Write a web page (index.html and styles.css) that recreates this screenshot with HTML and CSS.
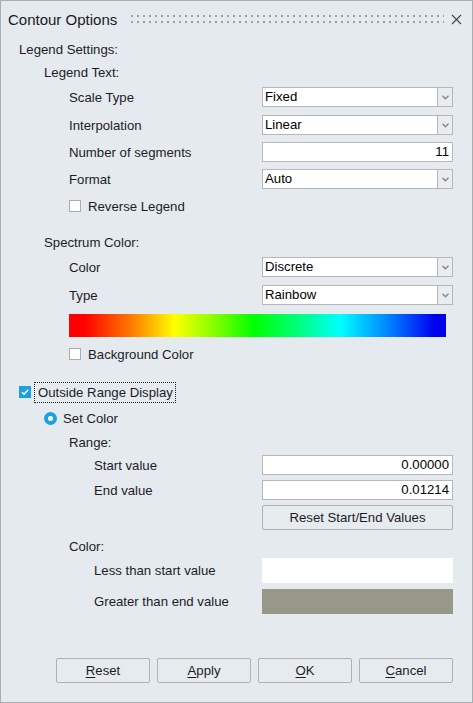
FILE: index.html
```html
<!DOCTYPE html>
<html>
<head>
<meta charset="utf-8">
<link rel="stylesheet" href="styles.css">
</head>
<body>
<div class="window">
  <div class="titlebar">
    <span class="title">Contour Options</span>
    <span class="grip"></span>
    <span class="close">
      <svg width="11" height="11" viewBox="0 0 11 11"><path d="M1 1L10 10M10 1L1 10" stroke="#444" stroke-width="1.1" fill="none"/></svg>
    </span>
  </div>

  <div class="row h22 l1">Legend Settings:</div>
  <div class="row h22 l2 mt1">Legend Text:</div>

  <div class="row h20 l3 mt4"><span class="label">Scale Type</span><div class="select"><span class="val">Fixed</span><span class="arrow"><svg width="7" height="5" viewBox="0 0 7 5"><path d="M0.5 0.8L3.5 3.8L6.5 0.8" stroke="#888" stroke-width="1.4" fill="none"/></svg></span></div></div>
  <div class="row h20 l3 mt8"><span class="label">Interpolation</span><div class="select"><span class="val">Linear</span><span class="arrow"><svg width="7" height="5" viewBox="0 0 7 5"><path d="M0.5 0.8L3.5 3.8L6.5 0.8" stroke="#888" stroke-width="1.4" fill="none"/></svg></span></div></div>
  <div class="row h20 l3 mt7"><span class="label">Number of segments</span><div class="input">11</div></div>
  <div class="row h20 l3 mt7"><span class="label">Format</span><div class="select"><span class="val">Auto</span><span class="arrow"><svg width="7" height="5" viewBox="0 0 7 5"><path d="M0.5 0.8L3.5 3.8L6.5 0.8" stroke="#888" stroke-width="1.4" fill="none"/></svg></span></div></div>
  <div class="row h20 l3 mt7"><span class="checkbox"></span><span class="cblabel">Reverse Legend</span></div>

  <div class="row h22 l2 mt15">Spectrum Color:</div>
  <div class="row h20 l3 mt4"><span class="label">Color</span><div class="select"><span class="val">Discrete</span><span class="arrow"><svg width="7" height="5" viewBox="0 0 7 5"><path d="M0.5 0.8L3.5 3.8L6.5 0.8" stroke="#888" stroke-width="1.4" fill="none"/></svg></span></div></div>
  <div class="row h20 l3 mt8"><span class="label">Type</span><div class="select"><span class="val">Rainbow</span><span class="arrow"><svg width="7" height="5" viewBox="0 0 7 5"><path d="M0.5 0.8L3.5 3.8L6.5 0.8" stroke="#888" stroke-width="1.4" fill="none"/></svg></span></div></div>
  <div class="row l3 mt9"><div class="spectrum"></div></div>
  <div class="row h20 l3 mt7"><span class="checkbox"></span><span class="cblabel">Background Color</span></div>

  <div class="row h20 l1 mt18"><span class="checkbox checked"><svg width="12" height="12" viewBox="0 0 12 12"><path d="M3 6.2L5 8.2L9.2 3.8" stroke="#fff" stroke-width="1.6" fill="none"/></svg></span><span class="cblabel focus">Outside Range Display</span></div>
  <div class="row h20 l2 mt6"><span class="radio"></span><span class="cblabel">Set Color</span></div>
  <div class="row h20 l3 mt4">Range:</div>
  <div class="row h20 l4 mt3"><span class="label">Start value</span><div class="input">0.00000</div></div>
  <div class="row h20 l4 mt5"><span class="label">End value</span><div class="input">0.01214</div></div>
  <div class="row h25 l4 mt5"><span class="label"></span><div class="button wide">Reset Start/End Values</div></div>
  <div class="row h20 l3 mt6">Color:</div>
  <div class="row h25 l4 mt2"><span class="label">Less than start value</span><div class="swatch white"></div></div>
  <div class="row h25 l4 mt6"><span class="label">Greater than end value</span><div class="swatch grey"></div></div>

  <div class="footer">
    <div class="button"><u>R</u>eset</div>
    <div class="button"><u>A</u>pply</div>
    <div class="button"><u>O</u>K</div>
    <div class="button"><u>C</u>ancel</div>
  </div>
</div>
</body>
</html>
```

FILE: styles.css
```css
html, body {
  margin: 0;
  padding: 0;
  background: #e4eaee;
}
body {
  font-family: "Liberation Sans", Arial, sans-serif;
  font-size: 13.2px;
  color: #1c1c28;
}
.window {
  box-sizing: border-box;
  width: 473px;
  height: 703px;
  border: 1px solid #a8adb2;
  background: #e4eaee;
  position: relative;
}
.titlebar {
  height: 38px;
  display: flex;
  align-items: center;
  margin-top: -1px;
  padding-left: 7px;
  padding-right: 10px;
}
.title {
  font-size: 15px;
  color: #1a1a24;
}
.grip {
  flex: 1;
  height: 8px;
  margin-left: 14px;
  margin-right: 6px;
  background-image: radial-gradient(circle at 1px 1px, #9aa0a4 0.9px, transparent 1.2px);
  background-size: 6px 6px;
}
.close {
  width: 12px;
  height: 12px;
  display: flex;
  align-items: center;
  justify-content: center;
}
.row {
  display: flex;
  align-items: center;
  white-space: nowrap;
}
.h20 { height: 20px; }
.h22 { height: 22px; }
.h25 { height: 25px; }
.l1 { padding-left: 18px; }
.l2 { padding-left: 43px; }
.l3 { padding-left: 68px; }
.l4 { padding-left: 93px; }
.mt1 { margin-top: 1px; }
.mt2 { margin-top: 2px; }
.mt3 { margin-top: 3px; }
.mt4 { margin-top: 4px; }
.mt5 { margin-top: 5px; }
.mt6 { margin-top: 6px; }
.mt7 { margin-top: 7px; }
.mt8 { margin-top: 8px; }
.mt9 { margin-top: 9px; }
.mt15 { margin-top: 15px; }
.mt18 { margin-top: 18px; }
.label {
  flex: 1;
}
.select {
  width: 191px;
  height: 20px;
  margin-right: 19px;
  display: flex;
  box-sizing: border-box;
}
.select .val {
  flex: 1;
  background: #fff;
  border: 1px solid #b4b8bc;
  box-sizing: border-box;
  padding-left: 2px;
  line-height: 18px;
  color: #000;
}
.select .arrow {
  width: 15px;
  border: 1px solid #b4b8bc;
  border-left: none;
  box-sizing: border-box;
  display: flex;
  align-items: center;
  justify-content: center;
  background: #e8edf0;
}
.input {
  width: 191px;
  height: 20px;
  margin-right: 19px;
  box-sizing: border-box;
  background: #fff;
  border: 1px solid #b4b8bc;
  text-align: right;
  padding-right: 3px;
  line-height: 18px;
  color: #000;
}
.checkbox {
  width: 12px;
  height: 12px;
  box-sizing: border-box;
  border: 1px solid #a9adb2;
  background: #fff;
  display: inline-block;
  margin-right: 7px;
}
.checkbox.checked {
  background: #1ba1e2;
  border-color: #1ba1e2;
  display: flex;
  align-items: center;
  justify-content: center;
}
.checkbox.checked svg { margin: -1px; }
.radio {
  width: 13px;
  height: 13px;
  border-radius: 50%;
  background: #1ba1e2;
  position: relative;
  margin-right: 6px;
  box-sizing: border-box;
}
.radio::after {
  content: "";
  position: absolute;
  left: 4px;
  top: 4px;
  width: 5px;
  height: 5px;
  border-radius: 50%;
  background: #fff;
}
.cblabel.focus {
  outline: 1px dotted #222;
  outline-offset: 0;
  padding: 2px 2px 2px 3px;
  margin-left: -3px;
}
.spectrum {
  width: 377px;
  height: 23px;
  background: linear-gradient(to right,
    #ff0000 0%, #ff0000 4%, #ff8000 17%, #ffff00 28%, #80ff00 39%, #00ff00 49%,
    #00ff80 61%, #00ffff 72%, #0080ff 85%, #0000f0 97%, #0000e8 100%);
}
.button {
  box-sizing: border-box;
  border: 1px solid #aeb2b6;
  border-radius: 2px;
  background: #e6ebee;
  display: flex;
  align-items: center;
  justify-content: center;
  color: #1c1c28;
}
.button.wide {
  width: 191px;
  height: 25px;
  margin-right: 19px;
}
.swatch {
  width: 191px;
  height: 25px;
  margin-right: 19px;
}
.swatch.white { background: #ffffff; }
.swatch.grey { background: #979888; }
.footer {
  margin-top: 44px;
  display: flex;
  justify-content: flex-end;
  gap: 7px;
  padding-right: 19px;
}
.footer .button {
  width: 94px;
  height: 25px;
}
.footer u {
  text-underline-offset: 2px;
}
```
